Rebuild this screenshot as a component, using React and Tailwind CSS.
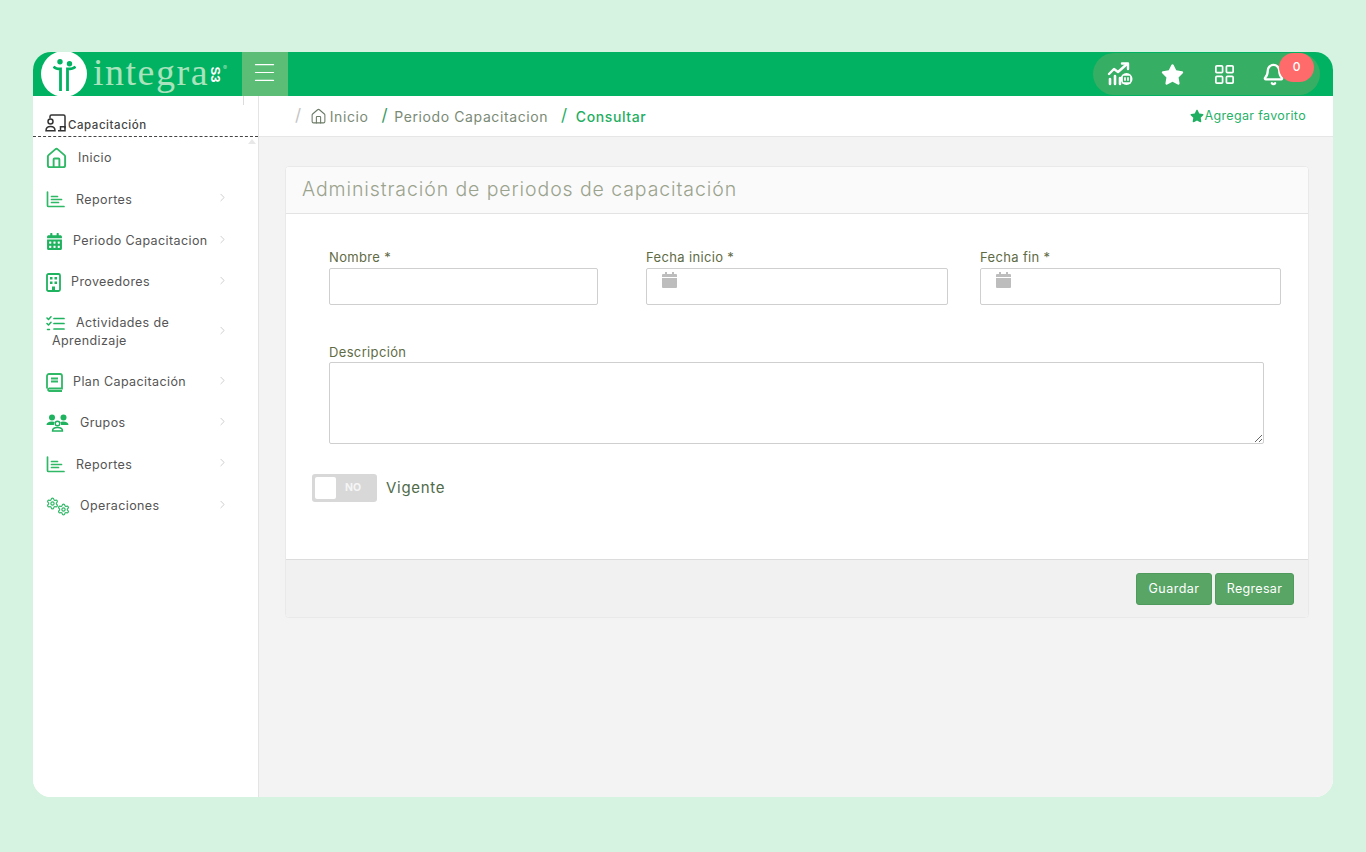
import { House, ChevronRight, LayoutGrid, Bell, Menu, Settings } from 'lucide-react';
import { FaStar, FaCalendarAlt } from 'react-icons/fa';

const font = "font-['Inter','Noto_Sans',sans-serif]";

function ReportIcon() {
  return (
    <svg width="19" height="17" viewBox="0 0 19 17" fill="none" stroke="#2fb866" strokeWidth="1.700" strokeLinecap="round">
      <path d="M1.500 1v13.500a1 1 0 0 0 1 1H18" />
      <path d="M5.500 5.500h6M5.500 8.500h10M5.500 11.500h7" />
    </svg>
  );
}

function BuildingIcon() {
  return (
    <svg width="15" height="19" viewBox="0 0 15 19" fill="none" stroke="#1fb25f" strokeWidth="1.800">
      <rect x="1" y="1" width="13" height="17" rx="1.500" />
      <path d="M4 4h2.500v2.500H4zM8.500 4H11v2.500H8.500zM4 8.500h2.500V11H4zM8.500 8.500H11V11H8.500zM6 13.500h3V18H6z" fill="#1fb25f" stroke="none" />
    </svg>
  );
}

function ChecklistIcon() {
  return (
    <svg width="19" height="15" viewBox="0 0 19 15" fill="none" stroke="#1fb25f" strokeWidth="1.500" strokeLinecap="round" strokeLinejoin="round">
      <path d="M1 2l1.500 1.500L5 .800M1 7.500L2.500 9 5 6.300" />
      <path d="M1.500 13.500h2" />
      <path d="M8 2.500h10M8 7.500h10M8 13h10" strokeWidth="1.700" />
    </svg>
  );
}

function BookIcon() {
  return (
    <svg width="17" height="19" viewBox="0 0 17 19" fill="none" stroke="#2fb866" strokeWidth="1.800">
      <path d="M1 15.500V3a2 2 0 0 1 2-2h11a2 2 0 0 1 2 2v12.500H3a1.300 1.300 0 0 0 0 2.500h13" />
      <path d="M5 5.500h7M5 8.500h7" />
    </svg>
  );
}

function GroupIcon() {
  return (
    <svg width="23" height="18" viewBox="0 0 23 18" fill="#1fb25f">
      <circle cx="6" cy="3.500" r="3" />
      <circle cx="17.500" cy="3.500" r="3" />
      <path d="M0.500 11c0-2 2-3.500 5.500-3.500 1 0 2 .2 2.800.5-.8 1-1 2-.8 3H0.500zM22.500 11c0-2-2-3.500-5.500-3.500-1 0-2 .2-2.800.5.8 1 1 2 .8 3h7.500z" />
      <circle cx="11.500" cy="9.500" r="2.300" fill="none" stroke="#1fb25f" strokeWidth="1.400" />
      <path d="M6.500 17c0-2.500 2-3.500 5-3.500s5 1 5 3.500z" fill="none" stroke="#1fb25f" strokeWidth="1.400" />
    </svg>
  );
}

function GearsIcon() {
  return (
    <span className="flex text-[#2fb866]">
      <Settings size={13} strokeWidth={2.200} />
      <Settings size={13} strokeWidth={2.200} className="-ml-[2px] mt-[6px]" />
    </span>
  );
}

function TeacherIcon() {
  return (
    <svg width="21" height="18" viewBox="0 0 21 18" fill="none" stroke="#333" strokeWidth="1.500">
      <path d="M5 4.500V2.500A1.500 1.500 0 0 1 6.500 1h12A1.500 1.500 0 0 1 20 2.500v12" />
      <circle cx="5.500" cy="7.500" r="2.500" />
      <path d="M1 16.700c0-3 1.800-4.200 4.500-4.200s4.500 1.200 4.500 4.200z" />
      <path d="M13 16.700h7v-4h-4.500v4" />
    </svg>
  );
}

function ChartIcon() {
  return (
    <svg width="26" height="24" viewBox="0 0 26 24" fill="none" stroke="#fff" strokeWidth="2.400" strokeLinecap="round" strokeLinejoin="round">
      <path d="M2 12l5-5 4 3 9-8" />
      <path d="M15 1.500h6v5.500" />
      <path d="M3 22v-5M8 22v-8M13 22v-6" strokeWidth="2.600" />
      <circle cx="19.500" cy="17" r="6" fill="#fff" stroke="none" />
      <path d="M16.500 14.500h6v5h-6zM19.500 14.500v5" stroke="#36ae64" strokeWidth="1.300" />
    </svg>
  );
}

function InputCalendar() {
  return (
    <svg width="15" height="16" viewBox="0 0 15 16" fill="#bdbdbd" className="absolute left-[16px] top-[4px]">
      <path d="M3 0h2v2h5V0h2v2h2a1 1 0 0 1 1 1v2H0V3a1 1 0 0 1 1-1h2z" />
      <path d="M0 6h15v9a1 1 0 0 1-1 1H1a1 1 0 0 1-1-1z" />
    </svg>
  );
}

function Logo() {
  return (
    <div className="flex items-center h-full pl-[8px] w-[209px] shrink-0">
      <div className="w-[46px] h-[46px] rounded-full bg-white flex items-center justify-center shrink-0">
        <svg width="23" height="34" viewBox="0 0 23 34" fill="#00b261" className="mt-[4px]">
          <circle cx="7" cy="2.800" r="2.700" />
          <circle cx="16.500" cy="4.800" r="2.700" />
          <path d="M0.500 7.500C2 9.500 4 10 7.500 10V32M22.500 7.500C21 9.500 18.500 10 14.500 10V32" fill="none" stroke="#00b261" strokeWidth="2.800" />
        </svg>
      </div>
      <span className="font-['Liberation_Serif',serif] text-[38px] leading-none text-[#a8e3bd] ml-[6px] tracking-[1.500px] -mt-[4px]">integra</span>
      <span className="font-['Liberation_Sans',sans-serif] font-bold text-[13px] leading-none text-white rotate-90 -ml-[1px]">S3</span>
      <span className="text-[6px] leading-none text-[#a8e3bd] -mt-[12px] -ml-[1px]">®</span>
    </div>
  );
}

function SideItem({ icon, label, gap, arrow = true, second, itemClass = 'h-[41.5px]' }) {
  return (
    <div className={`relative flex items-center pl-[13px] pr-[29px] ${itemClass}`}>
      <div className="flex-1 min-w-0">
        <div className="flex items-center h-[18px]">
          <span className="w-[23px] flex justify-start shrink-0">{icon}</span>
          <span className={`text-[12.500px] leading-[18px] tracking-[0.400px] text-[#555] whitespace-nowrap ${gap}`}>{label}</span>
        </div>
        {second && <div className="text-[12.500px] leading-[18px] tracking-[0.400px] text-[#555] pl-[6px]">{second}</div>}
      </div>
      {arrow && <ChevronRight size={13} strokeWidth={1.200} className="text-[#b5b5b5] shrink-0 -mt-[4px]" />}
    </div>
  );
}

function Field({ label, widthClass, calendar }) {
  return (
    <div className={widthClass}>
      <label className="block text-[13px] leading-[16px] tracking-[0.350px] text-[#5f6b45] mb-[3px]">{label}</label>
      <div className="relative">
        {calendar && <InputCalendar />}
        <input type="text" className="block w-full h-[37px] rounded-[2px] border border-[#cfcfcf] bg-white outline-none" />
      </div>
    </div>
  );
}

export default function App() {
  return (
    <div className={`h-[852px] bg-[#d6f3e1] pt-[52px] pb-[55px] px-[33px] overflow-hidden ${font}`}>
      <div className="h-full rounded-[18px] overflow-hidden bg-white flex flex-col">
        {/* header */}
        <header className="h-[44px] bg-[#00b261] flex items-stretch shrink-0">
          <Logo />
          <button className="w-[46px] bg-[#5cbd77] flex items-center justify-center text-white">
            <Menu size={27} strokeWidth={1.100} className="-ml-[2px] -mt-[4px]" />
          </button>
          <div className="flex-1" />
          <div className="relative mr-[13px] mt-[1px] mb-[1px] w-[227px] rounded-full bg-[#36ae64] flex items-center pl-[14px] text-white">
            <ChartIcon />
            <FaStar size={23} className="ml-[28px]" />
            <LayoutGrid size={23} strokeWidth={1.800} className="ml-[29px]" />
            <Bell size={23} strokeWidth={2.400} className="ml-[26px]" />
            <span className="absolute left-[186px] top-0 w-[35px] h-[29px] rounded-full bg-[#ff6b6b] text-[12px] font-medium flex items-center justify-center pb-[2px]">0</span>
          </div>
        </header>

        <div className="flex-1 flex min-h-0">
          {/* sidebar */}
          <aside className="relative w-[226px] shrink-0 bg-white border-r border-[#e4e4e4]">
            <span className="absolute left-[210px] top-0 w-px h-[9px] bg-[#dcdcdc]" />
            <div className="h-[41px] flex items-end gap-[2px] pl-[12px] pb-[4px] border-b border-dashed border-[#444]">
              <TeacherIcon />
              <span className="text-[11.500px] leading-[14px] tracking-[0.550px] font-medium text-[#444]">Capacitación</span>
            </div>
            <span className="absolute right-[2px] top-[43px] border-x-[4px] border-x-transparent border-b-[5px] border-b-[#e8e8e8]" />
            <nav>
              <SideItem itemClass="h-[42px]" icon={<House size={23} strokeWidth={2} className="text-[#2fb866] -ml-[1px]" />} label="Inicio" gap="ml-[9px]" arrow={false} />
              <SideItem icon={<ReportIcon />} label="Reportes" gap="ml-[7px]" />
              <SideItem icon={<FaCalendarAlt size={17} className="text-[#1fb25f]" />} label="Periodo Capacitacion" gap="ml-[4px]" />
              <SideItem itemClass="h-[40px]" icon={<BuildingIcon />} label="Proveedores" gap="ml-[2px]" />
              <SideItem itemClass="h-[60px]" icon={<ChecklistIcon />} label="Actividades de" second="Aprendizaje" gap="ml-[7px]" />
              <SideItem itemClass="h-[40px]" icon={<BookIcon />} label="Plan Capacitación" gap="ml-[4px]" />
              <SideItem itemClass="h-[42px]" icon={<GroupIcon />} label="Grupos" gap="ml-[11px]" />
              <SideItem icon={<ReportIcon />} label="Reportes" gap="ml-[7px]" />
              <SideItem icon={<GearsIcon />} label="Operaciones" gap="ml-[11px]" />
            </nav>
          </aside>

          {/* main */}
          <main className="flex-1 min-w-0 bg-[#f3f3f3] flex flex-col">
            <div className="h-[41px] bg-white border-b border-[#e6e6e6] flex items-center pl-[36px] pr-[27px] text-[14px] tracking-[0.600px] shrink-0">
              <span className="text-[#c4c4c4] text-[17px] mr-[8px]">/</span>
              <House size={17} strokeWidth={1.500} className="text-[#6b7a66] mr-[3px]" />
              <span className="text-[#7b8a76]">Inicio</span>
              <span className="text-[#3a9a62] text-[17px] ml-[13px] mr-[6px]">/</span>
              <span className="text-[#7b8a76]">Periodo Capacitacion</span>
              <span className="text-[#1fae62] text-[17px] ml-[13px] mr-[8px]">/</span>
              <span className="text-[#1fae62] font-medium">Consultar</span>
              <span className="ml-auto flex items-center text-[#27b267] text-[12.500px] tracking-[0.350px]">
                <FaStar size={14} className="text-[#1fae62]" />
                Agregar favorito
              </span>
            </div>

            <div className="pl-[26px] pr-[24px] pt-[29px]">
              <section className="rounded-[4px] border border-[#e9e9e9] bg-white overflow-hidden">
                <div className="h-[47px] bg-[#fafafa] border-b border-[#e3e3e3] flex items-center pl-[16px]">
                  <h2 className="text-[19.500px] leading-none tracking-[0.900px] font-light text-[#9aa38e]">Administración de periodos de capacitación</h2>
                </div>
                <div className="h-[345px] pt-[35px] pl-[43px]">
                  <div className="flex">
                    <Field label="Nombre *" widthClass="w-[269px]" />
                    <Field label="Fecha inicio *" widthClass="w-[302px] ml-[48px]" calendar />
                    <Field label="Fecha fin *" widthClass="w-[301px] ml-[32px]" calendar />
                  </div>
                  <div className="mt-[39px] w-[935px]">
                    <label className="block text-[13px] leading-[16px] tracking-[0.350px] text-[#5f6b45] mb-[2px]">Descripción</label>
                    <textarea className="block w-full h-[82px] rounded-[2px] border border-[#cfcfcf] bg-white outline-none" />
                  </div>
                  <div className="flex items-center mt-[30px] -ml-[17px]">
                    <div className="w-[65px] h-[28px] rounded-[3px] bg-[#d8d8d8] flex items-center pl-[3px]">
                      <span className="w-[21px] h-[22px] rounded-[2px] bg-white" />
                      <span className="ml-[9px] text-[10.500px] font-bold text-[#f5f5f5]">NO</span>
                    </div>
                    <span className="ml-[9px] pt-[1px] text-[15px] tracking-[0.700px] text-[#4f6b4a]">Vigente</span>
                  </div>
                </div>
                <div className="h-[58px] bg-[#f1f1f1] border-t border-[#dcdcdc] flex items-center justify-end gap-[3px] pr-[14px]">
                  <button className="w-[76px] h-[32px] pt-[1px] rounded-[3px] bg-[#59a566] border border-[#4f9a5c] text-white text-[12.500px] tracking-[0.500px]">Guardar</button>
                  <button className="w-[79px] h-[32px] pt-[1px] rounded-[3px] bg-[#59a566] border border-[#4f9a5c] text-white text-[12.500px] tracking-[0.300px]">Regresar</button>
                </div>
              </section>
            </div>
          </main>
        </div>
      </div>
    </div>
  );
}
